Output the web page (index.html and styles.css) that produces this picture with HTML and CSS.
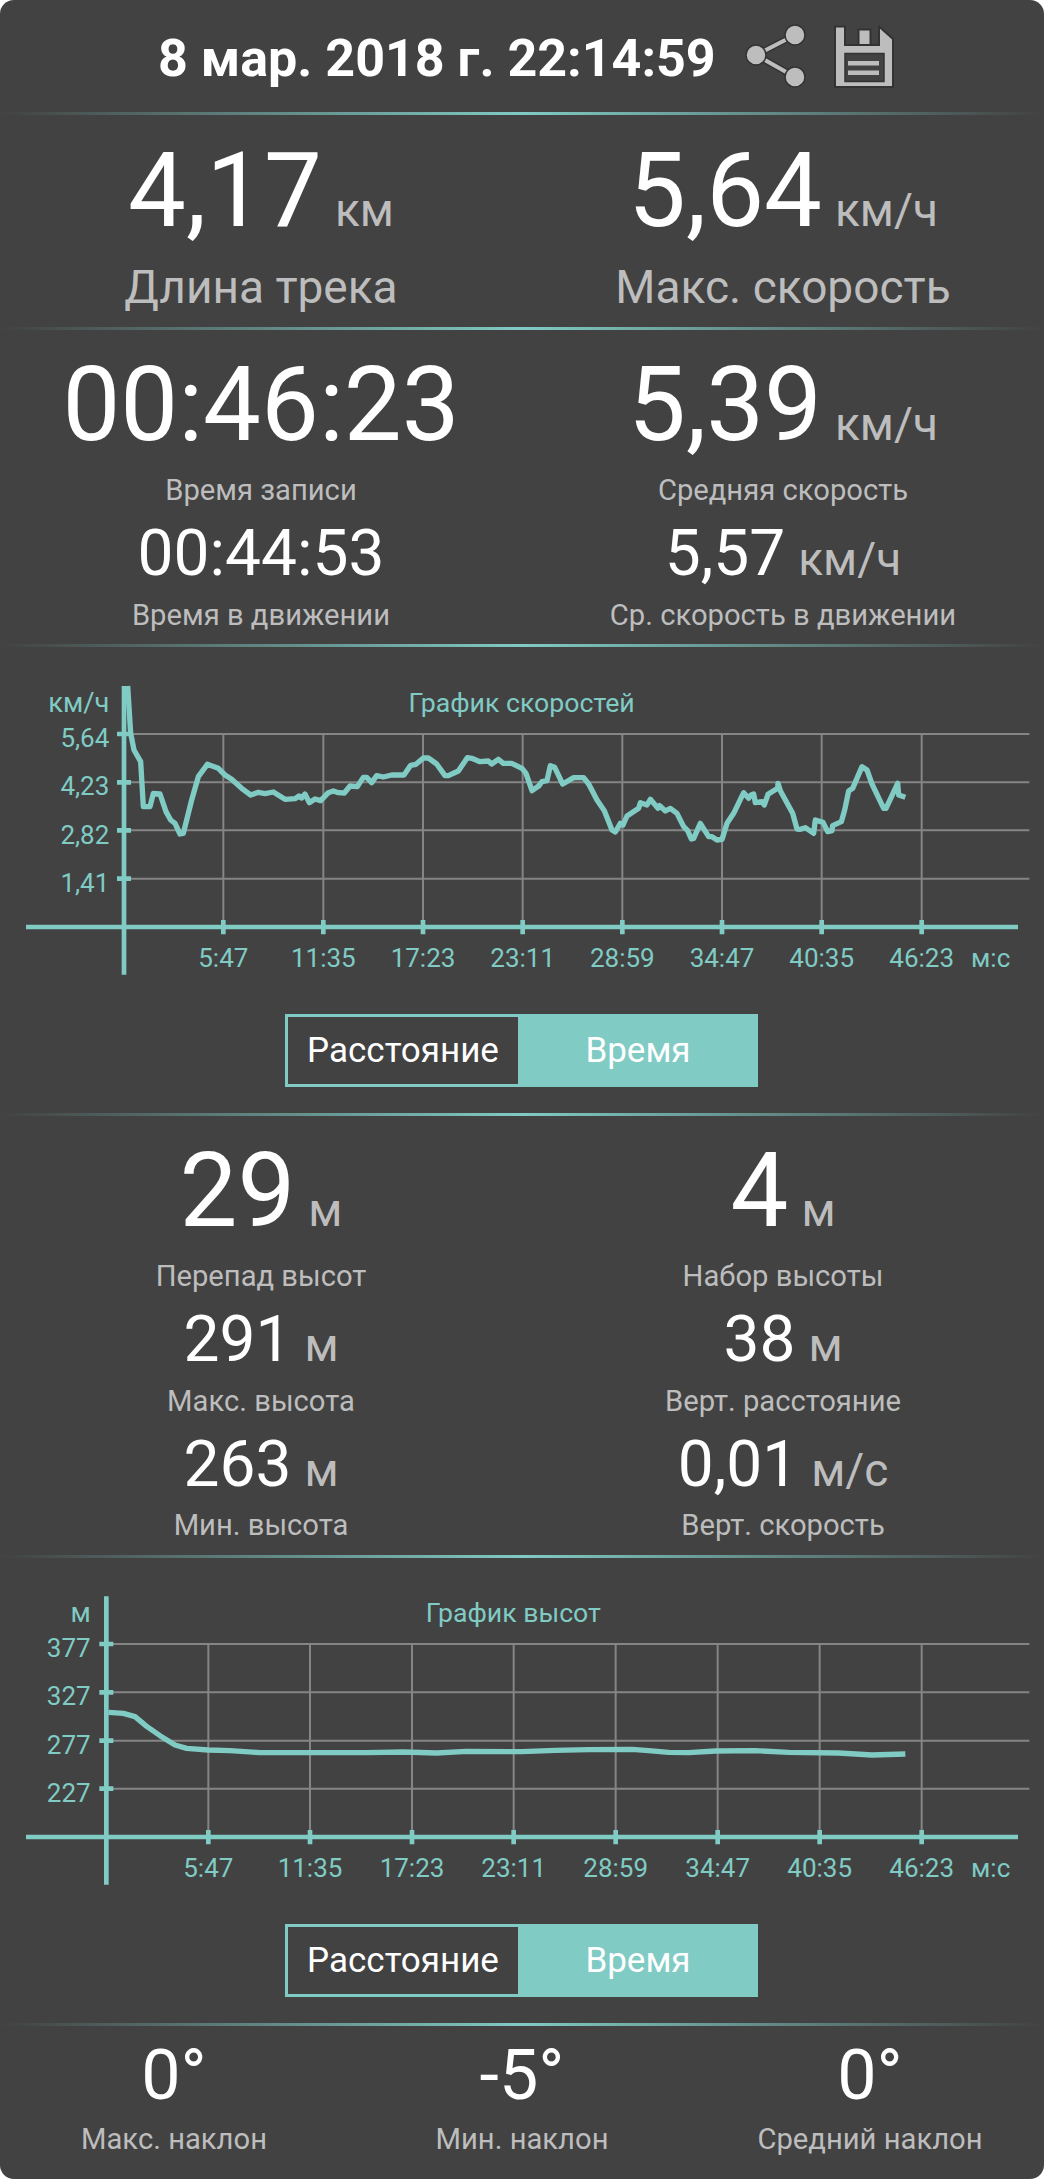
FILE: index.html
```html
<!DOCTYPE html>
<html lang="ru">
<head>
    <meta charset="UTF-8">
    <title>Статистика трека</title>
    <link rel="stylesheet" href="styles.css">
</head>
<body>

<div class="screen">
    <!-- Date and actions -->
    <div class="header">
        <span class="date">8 мар. 2018 г. 22:14:59</span>
        <svg class="icon-share" viewBox="0 0 64 64">
            <path class="share-edge" d="M51 11 L12 31 L51 53"/>
            <path class="share-line" d="M51 11 L12 31 L51 53"/>
            <circle class="share-dot" cx="51" cy="11" r="10"/>
            <circle class="share-dot" cx="12" cy="31" r="10"/>
            <circle class="share-dot" cx="51" cy="53" r="10"/>
        </svg>
        <svg class="icon-save" viewBox="0 0 60 63">
            <path class="save-body" d="M1 1.5 H11 V20 H45 V1.5 L59 14 V62 H1 Z"/>
            <rect class="save-body" x="24.5" y="4.5" width="12" height="15.5"/>
            <rect class="save-hole" x="11" y="28.5" width="39" height="28"/>
            <rect class="save-bar" x="14" y="36" width="31" height="4.5"/>
            <rect class="save-bar" x="14" y="45.5" width="31" height="4.5"/>
        </svg>
    </div>
    <div class="divider"></div>

    <!-- Track length and top speed -->
    <div class="row row-top">
        <div class="cell">
            <div class="value big">4,17<span class="unit">км</span></div>
            <div class="label wide">Длина трека</div>
        </div>
        <div class="cell">
            <div class="value big">5,64<span class="unit">км/ч</span></div>
            <div class="label wide">Макс. скорость</div>
        </div>
    </div>
    <div class="divider"></div>

    <!-- Times and average speeds -->
    <div class="row row-times">
        <div class="cell">
            <div class="value big">00:46:23</div>
            <div class="label">Время записи</div>
            <div class="value mid">00:44:53</div>
            <div class="label">Время в движении</div>
        </div>
        <div class="cell">
            <div class="value big">5,39<span class="unit">км/ч</span></div>
            <div class="label">Средняя скорость</div>
            <div class="value mid">5,57<span class="unit">км/ч</span></div>
            <div class="label">Ср. скорость в движении</div>
        </div>
    </div>
    <div class="divider"></div>

    <!-- Speed chart -->
    <svg class="chart chart-speed" viewBox="0 0 3132 1008">
        <g class="grid">
            <path d="M372 222 H3088 M372 367 H3088 M372 511 H3088 M372 656 H3088"/>
            <path d="M670 222 V801 M970 222 V801 M1269 222 V801 M1568 222 V801 M1867 222 V801 M2166 222 V801 M2465 222 V801 M2765 222 V801"/>
        </g>
        <g class="axis">
            <path d="M78 801 H3054 M372 78 V944"/>
            <path d="M351 222 H393 M351 367 H393 M351 511 H393 M351 656 H393"/>
            <path d="M670 780 V823 M970 780 V823 M1269 780 V823 M1568 780 V823 M1867 780 V823 M2166 780 V823 M2465 780 V823 M2765 780 V823"/>
        </g>
        <polyline class="line" points="383,78 392,220 402,270 422,305 430,440 450,440 460,400 480,402 498,455 512,480 525,490 540,522 550,520 575,420 595,350 622,313 655,325 675,345 695,358 725,385 752,405 775,397 795,401 820,396 855,418 885,416 897,408 905,414 915,402 928,428 945,417 962,422 985,398 1000,393 1015,398 1033,399 1050,378 1072,380 1090,352 1100,352 1115,368 1130,347 1150,351 1175,345 1212,345 1232,316 1248,313 1270,294 1285,294 1310,312 1335,347 1345,347 1375,333 1402,293 1415,295 1440,305 1465,303 1475,312 1495,298 1510,310 1535,310 1566,325 1578,340 1596,392 1616,378 1626,365 1641,362 1651,317 1664,322 1688,372 1721,353 1751,353 1766,372 1791,420 1813,452 1836,510 1846,516 1861,490 1869,495 1881,468 1916,445 1921,428 1941,435 1951,418 1974,445 1979,437 1996,453 2011,445 2031,460 2051,500 2063,512 2074,537 2081,535 2101,490 2126,530 2136,530 2151,540 2166,538 2181,490 2201,460 2231,398 2246,415 2253,405 2261,402 2266,428 2286,425 2293,435 2304,403 2333,385 2334,370 2341,392 2378,460 2391,507 2401,508 2416,503 2441,520 2446,480 2469,487 2483,515 2496,512 2498,497 2524,485 2534,450 2546,393 2558,385 2586,320 2601,330 2616,372 2651,445 2658,445 2693,370 2696,405 2716,412"/>
        <g class="tick-y">
            <text class="tick-unit" x="328" y="157">км/ч</text>
            <text x="328" y="262">5,64</text>
            <text x="328" y="406">4,23</text>
            <text x="328" y="551">2,82</text>
            <text x="328" y="695">1,41</text>
        </g>
        <g class="tick-x">
            <text x="670" y="922">5:47</text>
            <text x="970" y="922">11:35</text>
            <text x="1269" y="922">17:23</text>
            <text x="1568" y="922">23:11</text>
            <text x="1867" y="922">28:59</text>
            <text x="2166" y="922">34:47</text>
            <text x="2465" y="922">40:35</text>
            <text x="2765" y="922">46:23</text>
            <text x="2972" y="922">м:с</text>
        </g>
        <text class="chart-title" x="1565" y="157">График скоростей</text>
    </svg>
    <div class="switch">
        <div class="switch-off">Расстояние</div>
        <div class="switch-on">Время</div>
    </div>
    <div class="divider"></div>

    <!-- Altitude numbers -->
    <div class="row row-alt">
        <div class="cell">
            <div class="value big">29<span class="unit">м</span></div>
            <div class="label">Перепад высот</div>
            <div class="value mid">291<span class="unit">м</span></div>
            <div class="label">Макс. высота</div>
            <div class="value mid">263<span class="unit">м</span></div>
            <div class="label tight">Мин. высота</div>
        </div>
        <div class="cell">
            <div class="value big">4<span class="unit">м</span></div>
            <div class="label">Набор высоты</div>
            <div class="value mid">38<span class="unit">м</span></div>
            <div class="label">Верт. расстояние</div>
            <div class="value mid">0,01<span class="unit">м/с</span></div>
            <div class="label tight">Верт. скорость</div>
        </div>
    </div>
    <div class="divider"></div>

    <!-- Altitude chart -->
    <svg class="chart chart-alt" viewBox="0 0 3132 981">
        <g class="grid">
            <path d="M319 195 H3088 M319 340 H3088 M319 485 H3088 M319 629 H3088"/>
            <path d="M625 195 V774 M930 195 V774 M1236 195 V774 M1541 195 V774 M1847 195 V774 M2153 195 V774 M2459 195 V774 M2765 195 V774"/>
        </g>
        <g class="axis">
            <path d="M78 774 H3054 M319 52 V917"/>
            <path d="M298 195 H340 M298 340 H340 M298 485 H340 M298 629 H340"/>
            <path d="M625 753 V796 M930 753 V796 M1236 753 V796 M1541 753 V796 M1847 753 V796 M2153 753 V796 M2459 753 V796 M2765 753 V796"/>
        </g>
        <polyline class="line" points="325,400 370,403 405,413 440,442 480,470 525,498 560,508 625,513 690,515 780,521 1100,521 1210,519 1310,522 1400,517 1566,518 1666,514 1766,512 1896,511 1946,515 2006,520 2066,521 2146,516 2266,515 2366,520 2516,522 2616,528 2716,525"/>
        <g class="tick-y">
            <text class="tick-unit" x="272" y="130">м</text>
            <text x="272" y="235">377</text>
            <text x="272" y="379">327</text>
            <text x="272" y="524">277</text>
            <text x="272" y="668">227</text>
        </g>
        <g class="tick-x">
            <text x="625" y="895">5:47</text>
            <text x="930" y="895">11:35</text>
            <text x="1236" y="895">17:23</text>
            <text x="1541" y="895">23:11</text>
            <text x="1847" y="895">28:59</text>
            <text x="2153" y="895">34:47</text>
            <text x="2459" y="895">40:35</text>
            <text x="2765" y="895">46:23</text>
            <text x="2972" y="895">м:с</text>
        </g>
        <text class="chart-title" x="1540" y="130">График высот</text>
    </svg>
    <div class="switch">
        <div class="switch-off">Расстояние</div>
        <div class="switch-on">Время</div>
    </div>
    <div class="divider"></div>

    <!-- Slope -->
    <div class="row">
        <div class="cell">
            <div class="value slope">0°</div>
            <div class="label tight">Макс. наклон</div>
        </div>
        <div class="cell">
            <div class="value slope">-5°</div>
            <div class="label tight">Мин. наклон</div>
        </div>
        <div class="cell">
            <div class="value slope">0°</div>
            <div class="label tight">Средний наклон</div>
        </div>
    </div>
</div>

</body>
</html>
```
FILE: styles.css
```css
html, body {
    margin: 0;
    padding: 0;
    background-color: #fff;
}

body {
    font-family: Roboto, "Liberation Sans", sans-serif;
}

.screen {
    width: 1044px;
    height: 2179px;
    overflow: hidden;
    border-radius: 14px;
    background-color: #424242;
}

/* Header */
.header {
    height: 112px;
    display: flex;
    align-items: center;
    padding-left: 158px;
    box-sizing: border-box;
}

.date {
    font-size: 52px;
    font-weight: 700;
    color: #fff;
    margin-right: 28px;
    padding-top: 4px;
}

.icon-share {
    width: 64px;
    height: 64px;
    margin-right: 26px;
}

.share-edge {
    fill: none;
    stroke: #333;
    stroke-width: 7;
}

.share-line {
    fill: none;
    stroke: #bdbdbd;
    stroke-width: 4;
}

.share-dot {
    fill: #bdbdbd;
    stroke: #333;
    stroke-width: 1.5;
}

.icon-save {
    width: 60px;
    height: 63px;
}

.save-body {
    fill: #bdbdbd;
    stroke: #333;
    stroke-width: 2;
}

.save-hole {
    fill: #424242;
    stroke: #333;
    stroke-width: 1.5;
}

.save-bar {
    fill: #bdbdbd;
}

/* Gradient line between sections */
.divider {
    height: 3px;
    background: linear-gradient(90deg, #424242 0%, #80cbc4 50%, #424242 100%);
}

/* Number blocks */
.row {
    display: flex;
}

.cell {
    flex: 1;
    display: flex;
    flex-direction: column;
    align-items: center;
}

.row-top {
    height: 212px;
    padding-top: 1px;
    box-sizing: border-box;
}

.row-times {
    height: 314px;
}

.row-alt {
    height: 439px;
}

.value {
    color: #fff;
    white-space: nowrap;
}

.value.big {
    font-size: 103px;
    line-height: 120px;
    margin-top: 15px;
}

.value.mid {
    font-size: 64px;
    line-height: 72px;
    margin-top: 11px;
}

.value.slope {
    font-size: 70px;
    line-height: 80px;
    margin-top: 9px;
}

.unit {
    font-size: 46px;
    line-height: 0;
    color: #bdbdbd;
    margin-left: 13px;
}

.label {
    font-size: 29.2px;
    line-height: 34px;
    margin-top: 8px;
    color: #bdbdbd;
    white-space: nowrap;
}

.label.tight {
    margin-top: 7px;
}

.label.wide {
    font-size: 46px;
    line-height: 56px;
    margin-top: 8px;
}

/* Charts */
.chart {
    display: block;
    width: 1044px;
    height: 336px;
}

.chart-speed {
    margin-top: 13px;
}

.chart-alt {
    height: 327px;
    margin-top: 21px;
}

.grid path {
    fill: none;
    stroke: #858585;
    stroke-width: 6;
}

.axis path {
    fill: none;
    stroke: #80cbc4;
    stroke-width: 14;
}

.line {
    fill: none;
    stroke: #80cbc4;
    stroke-width: 16;
    stroke-linejoin: round;
}

.tick-y text {
    font-size: 78px;
    fill: #80cbc4;
    text-anchor: end;
}

.tick-y .tick-unit {
    font-size: 82px;
}

.tick-x text {
    font-size: 78px;
    fill: #80cbc4;
    text-anchor: middle;
}

.chart-title {
    font-size: 80px;
    fill: #80cbc4;
    text-anchor: middle;
}

/* Distance / time switch */
.switch {
    width: 473px;
    height: 73px;
    margin: 18px 0 26px 285px;
    display: flex;
    font-size: 35px;
    color: #fff;
}

.switch-off {
    flex: 0 0 233px;
    box-sizing: border-box;
    border: 3px solid #80cbc4;
    border-right-width: 0;
    display: flex;
    align-items: center;
    justify-content: center;
}

.switch-on {
    flex: 1;
    background-color: #80cbc4;
    display: flex;
    align-items: center;
    justify-content: center;
}
```
